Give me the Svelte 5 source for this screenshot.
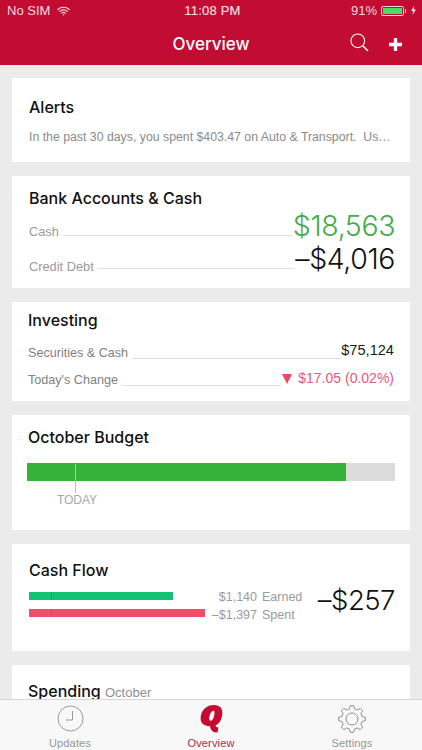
<script>
  const gearPath = (() => {
    const cx = 14, cy = 14, teeth = 8;
    let d = '';
    for (let i = 0; i < teeth; i++) {
      const a = (i / teeth) * Math.PI * 2 - Math.PI / 2;
      const s = Math.PI / teeth;
      const pts = [
        [10.4, a - s * 0.62],
        [13.4, a - s * 0.34],
        [13.4, a + s * 0.34],
        [10.4, a + s * 0.62]
      ];
      for (const [r, t] of pts) {
        const x = (cx + r * Math.cos(t)).toFixed(2);
        const y = (cy + r * Math.sin(t)).toFixed(2);
        d += (d ? 'L' : 'M') + x + ' ' + y + ' ';
      }
    }
    return d + 'Z';
  })();
</script>

<div class="screen">
  <header class="top">
    <div class="status">
      <div class="st-left">
        <span>No SIM</span>
        <svg width="13" height="10" viewBox="0 0 15 11" fill="none" stroke="#f3dbe0" stroke-width="1.4" stroke-linecap="round">
          <path d="M1 3.8C4.6 .3 10.4 .3 14 3.8" />
          <path d="M3.2 6C5.6 3.7 9.4 3.7 11.8 6" />
          <path d="M5.3 8C6.5 6.9 8.5 6.9 9.7 8" />
          <circle cx="7.5" cy="9.8" r=".9" fill="#f3dbe0" stroke="none" />
        </svg>
      </div>
      <div class="st-time">11:08 PM</div>
      <div class="st-right">
        <span>91%</span>
        <span class="batt"><span class="batt-fill"></span></span>
        <span class="batt-tip"></span>
        <svg width="5" height="9" viewBox="0 0 5 9"><path d="M3 0L0 5h2L1.6 9 5 3.6H3Z" fill="#f3dbe0" /></svg>
      </div>
    </div>
    <div class="nav">
      <span class="nav-title">Overview</span>
      <div class="nav-actions">
        <svg class="ic-search" width="19" height="19" viewBox="0 0 20 20" fill="none" stroke="#fff" stroke-width="1.1">
          <circle cx="8.2" cy="8.2" r="7.2" />
          <path d="M13.4 13.4L19 19" stroke-width="1.6" />
        </svg>
        <svg class="ic-plus" width="13" height="13" viewBox="0 0 14 14"><path d="M5.2 0h3.6v5.2H14v3.6H8.8V14H5.2V8.8H0V5.2h5.2Z" fill="#fff" /></svg>
      </div>
    </div>
  </header>

  <main class="content">
    <section class="card alerts">
      <h2>Alerts</h2>
      <p>In the past 30 days, you spent $403.47 on Auto &amp; Transport.  Us…</p>
    </section>

    <section class="card bank">
      <h2>Bank Accounts &amp; Cash</h2>
      <div class="row big r1">
        <span class="lab">Cash</span><span class="rule"></span><span class="val green">$18,563</span>
      </div>
      <div class="row big r2">
        <span class="lab">Credit Debt</span><span class="rule"></span><span class="val">–$4,016</span>
      </div>
    </section>

    <section class="card invest">
      <h2>Investing</h2>
      <div class="row small">
        <span class="lab dark">Securities &amp; Cash</span><span class="rule"></span><span class="val amount">$75,124</span>
      </div>
      <div class="row small">
        <span class="lab dark">Today's Change</span><span class="rule"></span>
        <span class="val pink"><i class="tri"></i>$17.05 (0.02%)</span>
      </div>
    </section>

    <section class="card budget">
      <h2>October Budget</h2>
      <div class="bar"><div class="bar-fill"></div></div>
      <div class="today-wrap">
        <span class="today-line"></span>
        <span class="today">TODAY</span>
      </div>
    </section>

    <section class="card flow">
      <h2>Cash Flow</h2>
      <div class="flow-body">
        <div class="bars">
          <div class="fbar earned"></div>
          <div class="fbar spent"></div>
        </div>
        <div class="flabels">
          <div class="fl"><span>$1,140</span><span>Earned</span></div>
          <div class="fl"><span>–$1,397</span><span>Spent</span></div>
        </div>
        <div class="net">–$257</div>
      </div>
    </section>

    <section class="card spending">
      <h2>Spending <small>October</small></h2>
    </section>
  </main>

  <nav class="tabs">
    <div class="tab">
      <svg width="27" height="27" viewBox="0 0 27 27" fill="none" stroke="#9a9a9a" stroke-width="1">
        <circle cx="13.5" cy="13.5" r="12.5" />
        <path d="M15.5 6v9H9" />
      </svg>
      <span>Updates</span>
    </div>
    <div class="tab active">
      <svg width="23" height="28" viewBox="0 0 23 28">
        <path fill-rule="evenodd" fill="#c20c31" d="M14 0C20 0 23 3.5 22.3 9.5 21.7 15 19 19 15.5 20.5 15.8 21.8 16.5 22.4 18.5 22.6L17.5 27.6C13 27.6 10.6 25.5 10 21.3 3.5 21.3 0 17.8.7 11.8 1.4 4.8 6.8 0 14 0ZM13.6 5.8C11.6 5.8 10 8.6 9.4 11.8 8.9 14.5 9.4 15.8 10.4 15.8 12.4 15.8 13.8 13 14.3 10 14.7 7.5 14.6 5.8 13.6 5.8Z" />
      </svg>
      <span>Overview</span>
    </div>
    <div class="tab">
      <svg width="28" height="28" viewBox="0 0 28 28" fill="none" stroke="#8f8f8f" stroke-width="1" stroke-linejoin="round">
        <path d={gearPath} />
        <circle cx="14" cy="14" r="6" />
      </svg>
      <span>Settings</span>
    </div>
  </nav>
</div>

<style>
  :global(body) {
    margin: 0;
    background: #ebebeb;
  }
  .screen {
    width: 422px;
    height: 750px;
    overflow: hidden;
    display: flex;
    flex-direction: column;
    position: relative;
    background: #ebebeb;
    font-family: Inter, "Liberation Sans", sans-serif;
    color: #111;
  }
  .top {
    flex: none;
    height: 65px;
    background: #c20c31;
    color: #fff;
    display: flex;
    flex-direction: column;
  }
  .status {
    height: 21px;
    display: grid;
    grid-template-columns: 1fr auto 1fr;
    align-items: center;
    padding: 0 6px 0 7px;
    font-family: "Liberation Sans", sans-serif;
    font-size: 13px;
    color: #f3dbe0;
  }
  .st-left {
    display: flex;
    align-items: center;
    gap: 7px;
  }
  .st-time {
    font-weight: 400;
    font-size: 13px;
    letter-spacing: .2px;
    -webkit-text-stroke: .2px #f3dbe0;
    margin-left: 2px;
  }
  .st-right {
    display: flex;
    justify-content: flex-end;
    align-items: center;
  }
  .batt {
    width: 23px;
    height: 10px;
    margin-left: 4px;
    border: 1px solid #f3dbe0;
    border-radius: 2px;
    box-sizing: border-box;
    padding: 1px;
    display: flex;
  }
  .batt-fill {
    flex: 1;
    background: #4cd964;
  }
  .batt-tip {
    width: 1.5px;
    height: 4px;
    background: #f3dbe0;
    margin: 0 5px 0 .5px;
  }
  .nav {
    flex: 1;
    position: relative;
    display: flex;
    align-items: center;
    justify-content: center;
  }
  .nav-title {
    font-size: 17px;
    font-weight: 500;
    margin-top: 1px;
  }
  .nav-actions {
    position: absolute;
    right: 20px;
    top: 12px;
    display: flex;
    align-items: flex-start;
    gap: 19px;
  }
  .ic-search {
    margin-right: 1px;
  }
  .ic-plus {
    margin-top: 5px;
  }
  .content {
    flex: 1;
    min-height: 0;
    overflow: hidden;
    padding: 13px 12px 0;
    display: flex;
    flex-direction: column;
  }
  .card {
    flex: none;
    background: #fff;
    box-sizing: border-box;
  }
  h2 {
    margin: 0;
    font-size: 16px;
    font-weight: 500;
    line-height: 20px;
    color: #111;
  }
  .alerts {
    height: 84px;
    padding: 19px 17px 0;
    margin-bottom: 14px;
  }
  .alerts p {
    margin: 12px 0 0;
    font-family: "Liberation Sans", sans-serif;
    font-size: 12.3px;
    line-height: 16px;
    color: #8a8a8a;
    white-space: pre;
  }
  .bank {
    height: 112px;
    padding: 12px 15px 0 17px;
    margin-bottom: 14px;
  }
  .row {
    display: flex;
    align-items: flex-end;
  }
  .lab {
    font-family: "Liberation Sans", sans-serif;
    color: #9a9a9a;
    font-size: 12.8px;
    white-space: nowrap;
  }
  .lab.dark {
    color: #7f7f7f;
    font-size: 12.6px;
  }
  .rule {
    flex: 1;
    border-bottom: 1px solid #dedede;
    margin: 0 1px 0 4px;
  }
  .big .val {
    font-size: 28.5px;
    font-weight: 300;
    line-height: 34px;
    letter-spacing: -.4px;
  }
  .big .lab {
    line-height: 16px;
    margin-bottom: 3px;
  }
  .big .rule {
    margin-bottom: 7px;
  }
  .r1 {
    margin-top: 1px;
  }
  .r2 {
    margin-top: -1px;
  }
  .r2 .lab {
    margin-bottom: 1px;
  }
  .green {
    color: #43ab4b;
  }
  .invest {
    height: 99px;
    padding: 8px 16px 0 16px;
    margin-bottom: 14px;
  }
  .invest h2 {
    margin-bottom: 9px;
  }
  .small {
    height: 27px;
    padding-bottom: 4px;
    box-sizing: border-box;
  }
  .small .lab {
    line-height: 18px;
  }
  .small .rule {
    margin: 0 1px 3px 4px;
  }
  .small .val {
    font-family: "Liberation Sans", sans-serif;
    font-size: 14px;
    line-height: 18px;
    white-space: nowrap;
    margin-bottom: 2px;
  }
  .small .val.amount {
    font-size: 14.6px;
    color: #1a1a1a;
    margin-bottom: 3px;
  }
  .small .val.pink {
    color: #e8597a;
  }
  .tri {
    display: inline-block;
    width: 0;
    height: 0;
    border-left: 5px solid transparent;
    border-right: 5px solid transparent;
    border-top: 10px solid #ee4560;
    margin-right: 6px;
    vertical-align: -1px;
  }
  .budget {
    height: 115px;
    padding: 12px 15px 0 15px;
    margin-bottom: 14px;
    position: relative;
  }
  .budget h2 {
    margin-left: 1px;
    margin-bottom: 16px;
  }
  .bar {
    height: 18px;
    background: #dcdcdc;
  }
  .bar-fill {
    width: 86.7%;
    height: 100%;
    background: #36b139;
  }
  .today-wrap {
    position: absolute;
    left: 44px;
    top: 49px;
    width: 40px;
    text-align: center;
  }
  .today-line {
    position: absolute;
    left: 19px;
    top: 0;
    width: 1px;
    height: 29px;
    background: #bdbdbd;
  }
  .today {
    position: absolute;
    left: 1px;
    top: 28px;
    font-family: "Liberation Sans", sans-serif;
    font-size: 12.2px;
    line-height: 16px;
    color: #a8a8a8;
    letter-spacing: -.2px;
  }
  .flow {
    height: 107px;
    padding: 16px 15px 0 17px;
    margin-bottom: 14px;
  }
  .flow-body {
    display: flex;
    position: relative;
  }
  .bars {
    width: 176px;
    padding-top: 12px;
  }
  .fbar {
    height: 8px;
    position: relative;
  }
  .fbar::after {
    content: "";
    position: absolute;
    left: 22px;
    top: 0;
    bottom: 0;
    width: 1px;
    background: rgba(0, 0, 0, .1);
  }
  .earned {
    width: 144px;
    background: #14c173;
    margin-bottom: 9px;
  }
  .spent {
    width: 176px;
    background: #f34e69;
  }
  .flabels {
    position: absolute;
    left: 168px;
    top: 9px;
    font-family: "Liberation Sans", sans-serif;
    font-size: 12.5px;
    color: #9a9a9a;
    line-height: 17.5px;
  }
  .fl {
    display: flex;
    gap: 5px;
  }
  .fl span:first-child {
    width: 60px;
    text-align: right;
    display: block;
  }
  .net {
    margin-left: auto;
    font-size: 27.5px;
    font-weight: 300;
    line-height: 34px;
    margin-top: 3px;
    letter-spacing: -.5px;
  }
  .spending {
    flex: 1;
    padding: 16px 16px 0;
  }
  .spending small {
    font-family: "Liberation Sans", sans-serif;
    font-size: 13px;
    font-weight: 400;
    color: #8f8f8f;
  }
  .tabs {
    position: absolute;
    left: 0;
    right: 0;
    bottom: 0;
    height: 51px;
    background: #f8f8f8;
    border-top: 1px solid #d6d6d6;
    box-sizing: border-box;
    display: grid;
    grid-template-columns: 140px 142px 140px;
  }
  .tab {
    display: flex;
    flex-direction: column;
    align-items: center;
    justify-content: space-between;
    padding-top: 5px;
    font-family: "Liberation Sans", sans-serif;
    font-size: 11px;
    line-height: 14px;
    letter-spacing: .15px;
    color: #979797;
  }
  .tab svg {
    flex: none;
  }
  .tab.active {
    color: #b5294b;
  }
</style>
